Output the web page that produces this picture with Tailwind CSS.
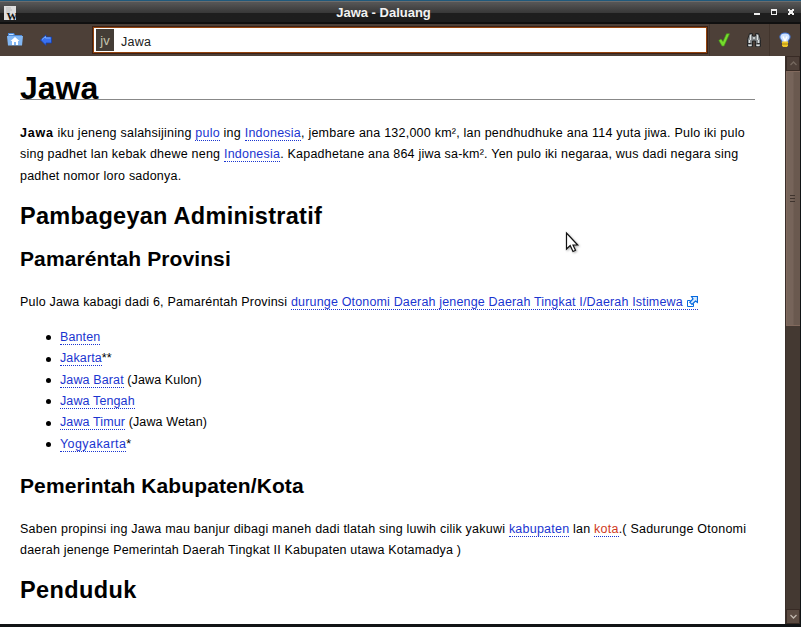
<!DOCTYPE html>
<html lang="jv">
<head>
<meta charset="utf-8">
<title>Jawa - Daluang</title>
<script src="https://cdn.jsdelivr.net/npm/@tailwindcss/browser@4"></script>
</head>
<body class="relative w-[801px] h-[627px] overflow-hidden bg-[#111416] flex flex-col font-['Liberation_Sans',Arial,sans-serif] text-black">
<header class="h-6 shrink-0 flex items-center border-t border-[#20597b] bg-linear-to-b from-[#555] from-8% via-[#393939] via-50% to-[#1e1e1e] to-52% shadow-[inset_0_1px_0_#6c6c6c,inset_0_-2px_0_#101010] text-white">
  <svg class="ml-1 w-3.5 h-3.5 shrink-0" viewBox="0 0 14 14"><path d="M0 0h12v14H0z" fill="#dedede"/><path d="M2 2h5M2 4h6M2 6h4" stroke="#bbb"/><text x="2.5" y="13.5" font-size="11" font-weight="bold" font-family="Liberation Serif" fill="#111">W</text></svg>
  <div class="flex-1 text-center text-[13px] leading-none font-bold text-[#f2f2f2] pr-1">Jawa - Daluang</div>
  <svg class="w-[48px] h-4 shrink-0" viewBox="0 0 48 16" shape-rendering="crispEdges"><path d="M1 8h6v2H1z" fill="#eee"/><path d="M18 4h6v6h-6z" fill="#eee"/><path d="M19 6h4v3h-4z" fill="#292929"/><path d="M35 4h2v1h2V4h2v2h-1v2h1v2h-2v-1h-2v1h-2V8h1V6h-1z" fill="#eee"/></svg>
</header>
<nav class="h-8 shrink-0 mr-px flex items-center bg-[#4d4038]">
  <svg class="ml-[7px] w-4 h-4" viewBox="0 0 16 16"><path d="M1 1h6l1 2h7v10H1z" fill="#4b87d5"/><path d="M2 2h4l1 1H2z" fill="#c9e2ff"/><path d="M0 4h16l-1 9.500H1z" fill="#82b7f4"/><path d="m8 5 4.500 4H11v4H9v-3H7v3H5V9H3.500z" fill="#fff"/></svg>
  <svg class="ml-[17px] w-3 h-3" viewBox="0 0 12 12"><path d="M.5 6 6 .8V3h5.500v6H6v2.500z" fill="#3971f0" stroke="#1740a8" stroke-width=".8"/><path d="M2 5.500 5.500 2.500V4h5" stroke="#7baeff" fill="none"/></svg>
  <div class="ml-10 w-[616px] h-[28px] border border-[#3d2115] bg-white flex items-center shadow-[inset_0_0_0_1px_#93430c]">
    <span class="ml-[3px] w-[18px] h-[22px] bg-[#443d36] text-[#c5c5ae] text-[13px] leading-[23px] text-center">jv</span>
    <span class="ml-[7px] pt-[3px] text-[12.5px] leading-[22px] tracking-[.25px] text-[#202020]">Jawa</span>
  </div>
  <div class="flex-1 h-full flex items-center border-l border-[#42352d] ml-px">
    <svg class="ml-[8px] w-3 h-3.5" viewBox="0 0 12 14"><path d="m.8 7.500 2.200-1.500 2 2.500L8.500.8h3L6 13H4z" fill="#76dc2d" stroke="#459e17" stroke-width=".6"/></svg>
    <svg class="ml-[16px] w-4 h-4" viewBox="0 0 16 16"><path d="M3.500 1.500h3V4h3V1.500h3l2 6v7h-5V9h-3v5.500h-5v-7z" fill="#7c8184" stroke="#252525"/><path d="M4.500 3v5M11.500 3v5M3.500 8v3M12.500 8v3M7 6h2M2.500 13.500h3m5 0h3" stroke="#dde2e2" stroke-width="1.300"/><path d="M1.500 11.500h4m5 0h4" stroke="#303030"/></svg>
    <div class="ml-[7px] h-full border-l border-[#42352d]"></div>
    <svg class="ml-[9px] w-3 h-4" viewBox="0 0 12 16"><path d="M6 1C.3 1-.5 6 3 8.700V11h6V8.700C12.500 6 11.700 1 6 1Z" fill="#cfe3ff" stroke="#4379dc"/><path d="M4 4.500 6 9l2-4.500" stroke="#fff" fill="none" stroke-width="1.500"/><path d="M3 9.500h6v4L8 15H4l-1-1.500z" fill="#edc726"/><path d="M3 12h6" stroke="#a88619"/></svg>
  </div>
</nav>
<div class="flex h-[568px] shrink-0 mr-px">
<main class="w-[785px] bg-white pl-5 pr-[30px] text-[12.5px] leading-[21.3px] tracking-[.22px] whitespace-nowrap overflow-hidden">
  <h1 class="mt-4 h-7 border-b border-[#888] text-[32px] leading-[32px] tracking-normal font-bold">Jawa</h1>
  <p class="mt-[23px]"><span class="block tracking-[.232px]"><b class="tracking-[.8px]">Jawa</b> iku jeneng salahsijining <a class="text-[#1a35d0] border-b border-dotted border-[#1a35d0]">pulo</a> ing <a class="text-[#1a35d0] border-b border-dotted border-[#1a35d0]">Indonesia</a>, jembare ana 132,000 km², lan pendhudhuke ana 114 yuta jiwa. Pulo iki pulo</span>
  <span class="block">sing padhet lan kebak dhewe neng <a class="text-[#1a35d0] border-b border-dotted border-[#1a35d0]">Indonesia</a>. Kapadhetane ana 864 jiwa sa-km². Yen pulo iki negaraa, wus dadi negara sing</span>
  <span class="block">padhet nomor loro sadonya.</span></p>
  <h2 class="mt-[14px] text-[23.5px] leading-[30px] tracking-[.27px] font-bold">Pambageyan Administratif</h2>
  <h3 class="mt-[15px] text-[21px] leading-[26px] tracking-[.1px] font-bold">Pamaréntah Provinsi</h3>
  <p class="mt-[20px] tracking-[.2px]">Pulo Jawa kabagi dadi 6, Pamaréntah Provinsi <a class="tracking-[.165px] text-[#1a35d0] border-b border-dotted border-[#1a35d0]">durunge Otonomi Daerah jenenge Daerah Tingkat I/Daerah Istimewa <svg class="inline-block w-[11px] h-[11px] ml-px align-[-1px]" viewBox="0 0 11 11"><path d="M3.500 4.500h-3v6h6v-3" fill="none" stroke="#0669df"/><path d="M4.500.5h6v6L8.500 5 5 8.500 2.800 6.300 6 3z" fill="#d8ecff" stroke="#0669df" stroke-width="1.200"/></svg></a></p>
  <ul class="mt-[14px] pl-[26px] tracking-[.12px] [&>li]:flex [&>li]:items-center">
    <li><i class="w-[5px] h-[5px] rounded-full bg-black mr-[9px]"></i><span><a class="text-[#1a35d0] border-b border-dotted border-[#1a35d0]">Banten</a></span></li>
    <li><i class="w-[5px] h-[5px] rounded-full bg-black mr-[9px]"></i><span><a class="text-[#1a35d0] border-b border-dotted border-[#1a35d0]">Jakarta</a>**</span></li>
    <li><i class="w-[5px] h-[5px] rounded-full bg-black mr-[9px]"></i><span><a class="text-[#1a35d0] border-b border-dotted border-[#1a35d0]">Jawa Barat</a> (Jawa Kulon)</span></li>
    <li><i class="w-[5px] h-[5px] rounded-full bg-black mr-[9px]"></i><span><a class="text-[#1a35d0] border-b border-dotted border-[#1a35d0]">Jawa Tengah</a></span></li>
    <li><i class="w-[5px] h-[5px] rounded-full bg-black mr-[9px]"></i><span><a class="text-[#1a35d0] border-b border-dotted border-[#1a35d0]">Jawa Timur</a> (Jawa Wetan)</span></li>
    <li><i class="w-[5px] h-[5px] rounded-full bg-black mr-[9px]"></i><span><a class="tracking-[.42px] text-[#1a35d0] border-b border-dotted border-[#1a35d0]">Yogyakarta</a>*</span></li>
  </ul>
  <h3 class="mt-[18px] text-[21px] leading-[26px] tracking-[.1px] font-bold">Pemerintah Kabupaten/Kota</h3>
  <p class="mt-[20px]"><span class="block tracking-[.228px]">Saben propinsi ing Jawa mau banjur dibagi maneh dadi tlatah sing luwih cilik yakuwi <a class="text-[#1a35d0] border-b border-dotted border-[#1a35d0]">kabupaten</a> lan <a class="text-[#cf3a22] border-b border-dotted border-[#1a35d0]">kota</a>.( Sadurunge Otonomi</span>
  <span class="block tracking-[.185px]">daerah jenenge Pemerintah Daerah Tingkat II Kabupaten utawa Kotamadya )</span></p>
  <h2 class="mt-[13px] text-[23.5px] leading-[30px] tracking-[.4px] font-bold">Penduduk</h2>
</main>
<aside class="w-[15px] flex flex-col bg-[#443932] border-l border-[#3a2f2a]">
  <div class="h-[15px] shrink-0 bg-[#4e4039] border border-[#382b25] flex items-center justify-center"><svg class="w-[7px] h-[5px]" viewBox="0 0 7 5"><path d="m.5 4 3-3 3 3" fill="none" stroke="#75685f" stroke-width="1.300"/></svg></div>
  <div class="h-[255px] shrink-0 border-y border-l border-[#81695d] bg-linear-to-r from-[#76645a] from-45% to-[#6a594f] to-55% flex flex-col items-center justify-center gap-[2px] pb-px pr-[2px]"><i class="w-[5px] h-px bg-[#3f342e]"></i><i class="w-[5px] h-px bg-[#3f342e]"></i><i class="w-[5px] h-px bg-[#3f342e]"></i></div>
  <div class="flex-1"></div>
  <div class="h-[15px] shrink-0 bg-[#5a4a41] border border-[#382b25] flex items-center justify-center"><svg class="w-[7px] h-[5px]" viewBox="0 0 7 5"><path d="m.5 1 3 3 3-3" fill="none" stroke="#c0b6ad" stroke-width="1.300"/></svg></div>
</aside>
</div>
<svg class="absolute left-[565px] top-[231px] w-[15px] h-[22px] drop-shadow-[1px_1px_1px_#0005]" viewBox="0 0 15 22"><path d="M1.500 2v16l3.700-3.500L8 20.500l2.500-1.200L8 14h4.700z" fill="#fff" stroke="#111" stroke-width="1.200"/></svg>
</body>
</html>
